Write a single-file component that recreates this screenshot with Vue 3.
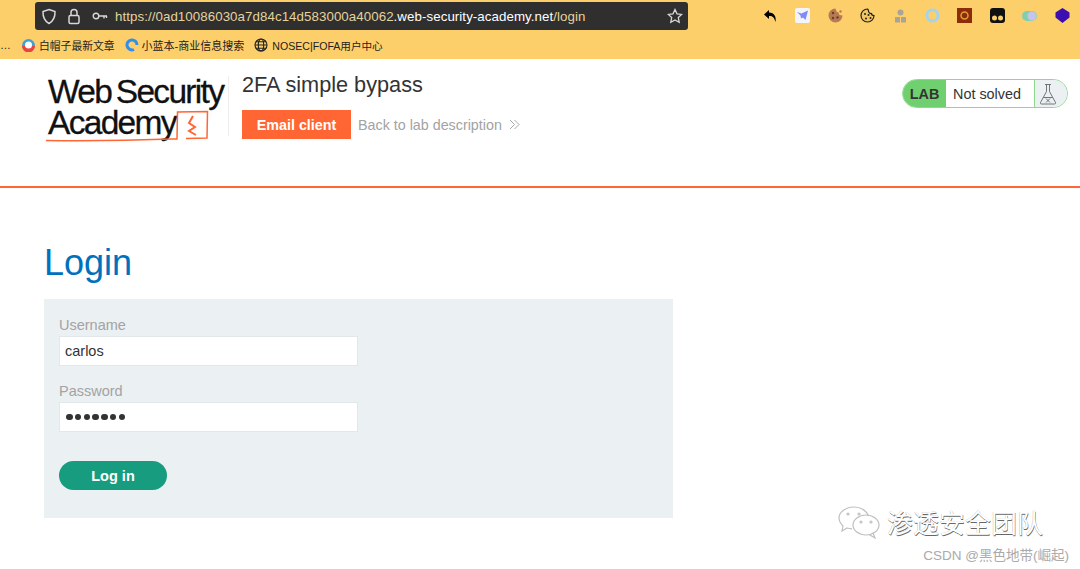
<script setup>
const exts = ['back','kite','cookie','cookie2','gear','ring','sun','eyes','toggle','cube']
</script>

<template>
  <div class="page">
    <div class="browser">
      <div class="toolbar">
        <div class="urlbar">
          <svg class="ub-ic" width="16" height="17" viewBox="0 0 16 17" fill="none" stroke="#d8d8d8" stroke-width="1.5"><path d="M8 1.500l6 2c.2 5.500-1.500 9.500-6 12-4.500-2.500-6.200-6.500-6-12z"/></svg>
          <svg class="ub-ic lock" width="14" height="17" viewBox="0 0 14 17" fill="none" stroke="#d8d8d8" stroke-width="1.5"><rect x="2" y="7.500" width="10" height="8" rx="1.500"/><path d="M4 7.500V4.500a3 3 0 0 1 6 0v3"/></svg>
          <svg class="ub-ic key" width="16" height="10" viewBox="0 0 16 10" fill="none" stroke="#d8d8d8" stroke-width="1.400"><circle cx="4" cy="5" r="2.800"/><path d="M7 5h8M12 5v2.500M14.500 5v2"/></svg>
          <span class="url"><span class="dim">https://0ad10086030a7d84c14d583000a40062</span>.web-security-academy.net<span class="dim">/login</span></span>
          <svg class="star" width="16" height="16" viewBox="0 0 16 16" fill="none" stroke="#d8d8d8" stroke-width="1.300"><path d="M8 1.500l2 4.300 4.700.6-3.400 3.200.9 4.700L8 12l-4.200 2.300.9-4.700L1.300 6.400 6 5.800z"/></svg>
        </div>
        <div class="exts">
          <span v-for="e in exts" :key="e" class="ext">
            <svg v-if="e==='back'" width="15" height="14" viewBox="0 0 15 14"><path d="M6 1L1 5.500 6 10V7c3-.3 5 .5 6.500 6 1-5-1-9.500-6.500-9.500z" fill="#000"/></svg>
            <svg v-else-if="e==='kite'" width="15" height="15" viewBox="0 0 15 15"><rect width="15" height="15" rx="2" fill="#f4f4fb"/><path d="M2 4l4.500 1.500L13 2.500 10.500 12 8 9.500 6 10.500 5.500 7.500z" fill="#7f8cf5"/></svg>
            <svg v-else-if="e==='cookie'" width="15" height="15" viewBox="0 0 15 15"><path d="M7.500.5a7 7 0 1 0 7 7l-3-.5-1-2.500-2-1z" fill="#b77a55"/><circle cx="5" cy="5" r="1.200" fill="#6b3d28"/><circle cx="5" cy="10" r="1.200" fill="#6b3d28"/><circle cx="9.500" cy="9.500" r="1.200" fill="#6b3d28"/><circle cx="12.500" cy="3.500" r="1.200" fill="#b77a55"/></svg>
            <svg v-else-if="e==='cookie2'" width="15" height="15" viewBox="0 0 15 15"><path d="M7.500 1a6.500 6.500 0 1 0 6.500 6.500c-1.500 0-2.500-.8-2.500-2-1.500.2-3-.8-3-2.500 0-.8-.3-1.500-1-2z" fill="#f2c561" stroke="#222" stroke-width="1.200"/><circle cx="5" cy="6" r="1" fill="#222"/><circle cx="8.500" cy="7" r="1" fill="#222"/><circle cx="10.500" cy="10" r="1" fill="#222"/><circle cx="6" cy="10.500" r="1" fill="#222"/></svg>
            <svg v-else-if="e==='gear'" width="13" height="14" viewBox="0 0 13 14"><circle cx="6.500" cy="3.500" r="3" fill="#a9a496"/><rect x="1" y="8" width="5" height="5.500" fill="#a9a496"/><rect x="7" y="8" width="5" height="5.500" fill="#a9a496"/></svg>
            <svg v-else-if="e==='ring'" width="15" height="15" viewBox="0 0 15 15"><circle cx="7.500" cy="7.500" r="5.500" fill="none" stroke="#a5d4ea" stroke-width="3"/></svg>
            <svg v-else-if="e==='sun'" width="15" height="15" viewBox="0 0 15 15"><rect width="15" height="15" fill="#8c2c0a"/><circle cx="7.500" cy="7.500" r="3.500" fill="none" stroke="#e0a030" stroke-width="1.500"/></svg>
            <svg v-else-if="e==='eyes'" width="15" height="15" viewBox="0 0 15 15"><rect width="15" height="15" rx="3" fill="#111"/><circle cx="4.500" cy="10" r="2.500" fill="#fcd06b"/><circle cx="10.500" cy="10" r="2.500" fill="#fcd06b"/></svg>
            <svg v-else-if="e==='toggle'" width="15" height="10" viewBox="0 0 15 10"><rect width="15" height="10" rx="5" fill="#7fcfb0"/><circle cx="10" cy="5" r="4.500" fill="#c5c5ea"/></svg>
            <svg v-else width="15" height="15" viewBox="0 0 15 15"><path d="M7.500 0L14.500 4.500v5L7.500 15 .5 9.500v-5z" fill="#3d0fb0"/></svg>
          </span>
        </div>
      </div>
      <div class="bookmarks">
        <span class="bm cut">…</span>
        <span class="bm b1">
          <svg width="13" height="13" viewBox="0 0 13 13"><circle cx="6.500" cy="6.500" r="6.500" fill="#3aa0e0"/><path d="M0 7a6.500 6.500 0 0 0 13 0z" fill="#e8453c"/><circle cx="6.500" cy="6" r="3.500" fill="#fff"/></svg>白帽子最新文章
        </span>
        <span class="bm b2">
          <svg width="14" height="14" viewBox="0 0 14 14" fill="none"><path d="M9 11.500A5 5 0 1 1 12 7" stroke="#2f8fee" stroke-width="3"/></svg>小蓝本-商业信息搜索
        </span>
        <span class="bm b3">
          <svg width="14" height="14" viewBox="0 0 14 14" fill="none" stroke="#222" stroke-width="1.100"><circle cx="7" cy="7" r="6"/><ellipse cx="7" cy="7" rx="2.700" ry="6"/><path d="M1 7h12M2 3.800h10M2 10.200h10"/></svg>NOSEC|FOFA用户中心
        </span>
      </div>
    </div>

    <header class="header">
      <div class="logo">
        <span class="logo-top">Web Security</span>
        <span class="logo-bottom">Academy</span>
        <svg class="logo-mark" width="172" height="36" viewBox="0 0 172 36" fill="none" stroke="#ff6633" stroke-width="1.500"><path d="M0 31.500c40 .5 85 0 125-1.500h6l.5-27 30-.5-.5 26.500-21 .5"/><path d="M147 7l-4 7 6 4-6 4 7 4" stroke-width="2"/></svg>
      </div>
      <div class="lab-info">
        <h2>2FA simple bypass</h2>
        <div class="lab-actions">
          <a class="email">Email client</a>
          <a class="back">Back to lab description
            <svg width="11" height="11" viewBox="0 0 11 11" fill="none" stroke="#a8a8a8" stroke-width="1"><path d="M1 1l4.500 4.500L1 10M5.500 1L10 5.500 5.500 10"/></svg>
          </a>
        </div>
      </div>
      <div class="status">
        <span class="lab">LAB</span>
        <span class="solved">Not solved</span>
        <span class="flask">
          <svg width="18" height="22" viewBox="0 0 18 22" fill="none" stroke="#555" stroke-width=".8"><path d="M6 1.500h6M7.500 1.500v7L1.500 19.500c-.4.8 0 1.500 1 1.500h13c1 0 1.400-.7 1-1.500l-6-11v-7"/><path d="M4.500 14.500h9M7 15.500l4 4M11 15.500l-4 4"/></svg>
        </span>
      </div>
    </header>

    <main class="main">
      <h1>Login</h1>
      <form class="panel">
        <label>Username</label>
        <div class="input">carlos</div>
        <label class="second">Password</label>
        <div class="input dots"><i v-for="n in 7" :key="n"></i></div>
        <button type="button">Log in</button>
      </form>
    </main>

    <div class="watermark">
      <svg width="44" height="34" viewBox="0 0 44 34" fill="none" stroke="#c0c0c0" stroke-width="1.200"><path d="M16 2C8 2 1 7 1 13c0 3.500 2 6 4 8l-1 5 5-3c1.500.5 3 .8 5 .8"/><path d="M16 2c7 0 13 4 14.500 9"/><ellipse cx="28" cy="20" rx="13" ry="10"/><path d="M35 28l2 5-6-3.500"/><circle cx="10" cy="9" r="1"/><circle cx="21" cy="9" r="1"/><circle cx="23" cy="17" r="1"/><circle cx="33" cy="17" r="1"/></svg>
      <span class="wm-text">渗透安全团队</span>
    </div>
    <div class="csdn">CSDN @黑色地带(崛起)</div>
  </div>
</template>

<style>
html, body { margin: 0; background: #fff; }
</style>

<style scoped>
.page { position: relative; width: 1080px; height: 569px; overflow: hidden; font-family: "Liberation Sans", "Noto Sans CJK SC", sans-serif; background: #fff; }
.browser { height: 59px; background: #fccf6a; }
.toolbar { height: 31px; display: flex; align-items: center; }
.urlbar { flex: none; margin-left: 35px; width: 653px; height: 28px; margin-top: 1px; background: #2f2f30; border-radius: 3px; display: flex; align-items: center; box-sizing: border-box; padding-left: 6px; }
.ub-ic { flex: none; margin-right: 10px; }
.lock { margin-right: 11px; }
.key { margin-right: 7px; }
.url { color: #fff; font-size: 13.300px; letter-spacing: .07px; white-space: nowrap; flex: 1; }
.dim { color: #e6d29c; }
.star { margin-right: 5px; flex: none; }
.exts { flex: none; display: flex; margin-left: 75px; }
.ext { width: 15px; height: 16px; margin-right: 17.400px; display: flex; align-items: center; justify-content: center; }
.bookmarks { height: 28px; display: flex; align-items: center; font-size: 10.800px; color: #222; }
.bm { display: flex; align-items: center; gap: 4px; white-space: nowrap; }
.cut { width: 22px; }
.b2 { margin-left: 10px; font-size: 11px; gap: 3px; }
.b3 { margin-left: 10px; font-size: 10.600px; }
.header { height: 127px; border-bottom: 2px solid #ff6633; display: flex; position: relative; }
.logo { position: relative; margin-left: 46px; margin-top: 17px; width: 183px; height: 60px; border-right: 1px solid #eee; box-sizing: border-box; display: flex; flex-direction: column; font-size: 33.500px; letter-spacing: -1.700px; word-spacing: -3px; color: #111; -webkit-text-stroke: .3px #111; }
.logo-top { padding-left: 2px; white-space: nowrap; line-height: 32px; }
.logo-bottom { padding-left: 2px; line-height: 30px; }
.logo-mark { position: absolute; left: 0; top: 33px; }
.lab-info { margin-left: 13px; margin-top: 13px; flex: none; }
h2 { margin: 0; font-size: 21.700px; font-weight: 400; color: #333; line-height: 26px; }
.lab-actions { display: flex; align-items: center; margin-top: 12px; }
.email { background: #ff6633; color: #fff; font-weight: 700; font-size: 14.300px; width: 109px; height: 29px; display: flex; align-items: center; justify-content: center; }
.back { margin-left: 7px; color: #a3a3a3; font-size: 14.300px; display: flex; align-items: center; gap: 7px; }
.status { position: absolute; left: 902px; top: 20px; width: 166px; height: 29px; border: 1px solid #8ed98c; border-radius: 15px; box-sizing: border-box; display: flex; overflow: hidden; font-size: 14.400px; color: #333; }
.lab { width: 43px; background: #70cf6f; font-weight: 700; display: flex; align-items: center; justify-content: center; box-sizing: border-box; }
.solved { flex: 1; display: flex; align-items: center; padding-left: 7px; }
.flask { width: 33px; background: #ebf0f2; border-left: 1px solid #8ed98c; box-sizing: border-box; display: flex; align-items: center; padding-left: 4px; }
.main { padding-left: 44px; }
h1 { margin: 0; padding-top: 54px; font-size: 36px; font-weight: 400; line-height: 42px; color: #0071bc; height: 57px; }
.panel { width: 629px; height: 219px; background: #ebf0f2; box-sizing: border-box; padding: 18px 14px 0 15px; display: flex; flex-direction: column; align-items: flex-start; }
label { color: #a3a3a3; font-size: 14.500px; line-height: 17px; height: 18px; }
.second { margin-top: 17px; }
.input { width: 299px; height: 30px; margin-top: 1px; background: #fff; border: 1px solid #e2e7e9; box-sizing: border-box; font-size: 14.500px; color: #333; line-height: 28px; padding-left: 5px; }
.dots { display: flex; align-items: center; gap: 2.300px; padding-left: 6px; }
.dots i { width: 6.500px; height: 6.500px; border-radius: 50%; background: #333; }
button { margin-top: 29px; width: 108px; height: 29px; border: 0; border-radius: 15px; background: #179c7f; color: #fff; font: 700 14.500px "Liberation Sans", sans-serif; }
.watermark { position: absolute; left: 838px; top: 503px; display: flex; align-items: center; gap: 5px; }
.wm-text { font-size: 26px; color: #fff; text-shadow: .6px .6px .6px #666, -.3px -.3px .5px #aaa; }
.csdn { position: absolute; right: 11px; top: 544px; font-size: 13.500px; color: #aaa; }
</style>
